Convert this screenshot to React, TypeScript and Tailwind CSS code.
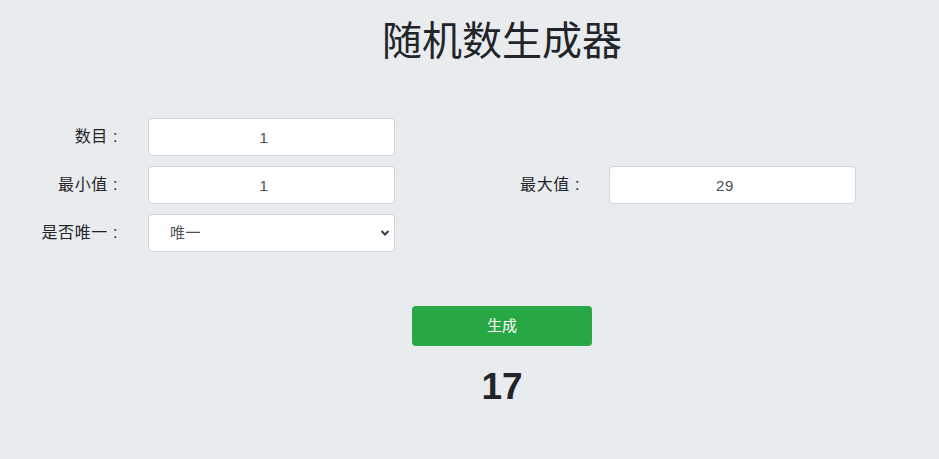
import React, { useState } from 'react';

const font = '"Liberation Sans", "Noto Sans CJK SC", sans-serif';

function Field({ label, value, onChange }: { label: string; value: string; onChange: (v: string) => void }) {
  return (
    <input
      aria-label={label}
      value={value}
      onChange={(e) => onChange(e.target.value)}
      className="w-[247px] h-[38px] rounded-[4px] border border-[#ced4da] bg-white pr-[15px] text-center text-[15px] text-[#495057] outline-none"
    />
  );
}

export default function App() {
  const [count, setCount] = useState('1');
  const [min, setMin] = useState('1');
  const [max, setMax] = useState('29');
  const [unique, setUnique] = useState('唯一');
  const [result, setResult] = useState('17');

  const generate = () => {
    const lo = parseInt(min, 10) || 0;
    const hi = parseInt(max, 10) || 0;
    const n = Math.max(1, parseInt(count, 10) || 1);
    const out: number[] = [];
    for (let i = 0; i < n; i++) out.push(lo + Math.floor(Math.random() * (hi - lo + 1)));
    setResult(out.join(', '));
  };

  return (
    <div className="min-h-screen bg-[#e9ecef] text-[#212529]" style={{ fontFamily: font }}>
      <h1 className="pt-[17px] pl-[65px] text-center text-[40px] leading-[48px] font-normal">随机数生成器</h1>

      <div className="mt-[53px] flex flex-col gap-[10px] text-[16px] tracking-[0.6px]">
        <div className="flex h-[38px] items-center">
          <label className="w-[118px] text-right">数目 :</label>
          <div className="ml-[30px]">
            <Field label="数目" value={count} onChange={setCount} />
          </div>
        </div>
        <div className="flex h-[38px] items-center">
          <label className="w-[118px] text-right">最小值 :</label>
          <div className="ml-[30px]">
            <Field label="最小值" value={min} onChange={setMin} />
          </div>
          <label className="w-[185px] text-right">最大值 :</label>
          <div className="ml-[29px]">
            <Field label="最大值" value={max} onChange={setMax} />
          </div>
        </div>
        <div className="flex h-[38px] items-center">
          <label className="w-[118px] text-right">是否唯一 :</label>
          <div className="relative ml-[30px]">
            <select
              value={unique}
              onChange={(e) => setUnique(e.target.value)}
              className="w-[247px] h-[38px] appearance-none rounded-[4px] border border-[#ced4da] bg-white pl-[21px] text-[15px] text-[#495057] outline-none"
            >
              <option>唯一</option>
              <option>不唯一</option>
            </select>
            <svg
              className="pointer-events-none absolute right-[5px] top-[15px]"
              width="10"
              height="8"
              viewBox="0 0 10 8"
              fill="none"
              stroke="#343a40"
              strokeWidth="2"
            >
              <path d="M1.5 2 5 5.5 8.5 2" />
            </svg>
          </div>
        </div>
      </div>

      <div className="mt-[54px] flex flex-col items-center pl-[65px]">
        <button
          onClick={generate}
          className="w-[180px] h-[40px] rounded-[4px] bg-[#28a745] text-[15px] text-white"
        >
          生成
        </button>
        <div className="mt-[17px] text-[37px] font-bold leading-[48px]">{result}</div>
      </div>
    </div>
  );
}
